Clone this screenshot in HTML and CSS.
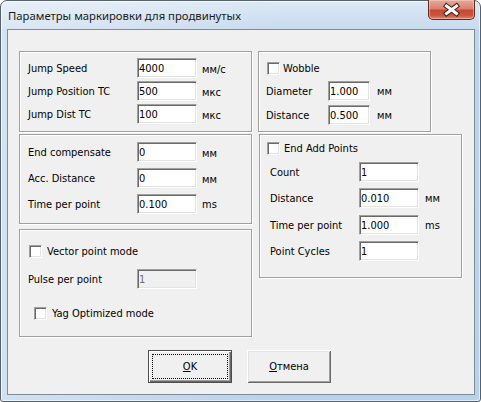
FILE: index.html
```html
<!DOCTYPE html>
<html>
<head>
<meta charset="utf-8">
<link rel="stylesheet" href="styles.css">
</head>
<body>
<div class="window">
  <div class="titlebar">
    <span class="title">Параметры маркировки для продвинутых</span>
    <div class="close">
      <svg width="47" height="19" viewBox="0 0 47 19">
        <path d="M18.5 6 L28.5 13.5 M28.5 6 L18.5 13.5" stroke="#4a1e18" stroke-width="5" stroke-linecap="square" fill="none"/>
        <path d="M18.5 6 L28.5 13.5 M28.5 6 L18.5 13.5" stroke="#ffffff" stroke-width="3" stroke-linecap="square" fill="none"/>
      </svg>
    </div>
  </div>
  <div class="client">
    <div class="columns">
      <div class="col-left">
        <div class="group g1">
          <div class="row"><span class="lbl w109">Jump Speed</span><input class="edit w60" type="text" value="4000"><span class="unit u2 gap5">мм/с</span></div>
          <div class="row r-g1"><span class="lbl w109">Jump Position TC</span><input class="edit w60" type="text" value="500"><span class="unit u2 gap5">мкс</span></div>
          <div class="row r-g1"><span class="lbl w109">Jump Dist TC</span><input class="edit w60" type="text" value="100"><span class="unit u2 gap5">мкс</span></div>
        </div>
        <div class="group g2">
          <div class="row"><span class="lbl w109">End compensate</span><input class="edit w60" type="text" value="0"><span class="unit u2 gap5">мм</span></div>
          <div class="row r-g2"><span class="lbl w109">Acc. Distance</span><input class="edit w60" type="text" value="0"><span class="unit u2 gap5">мм</span></div>
          <div class="row r-g2"><span class="lbl w109">Time per point</span><input class="edit w60" type="text" value="0.100"><span class="unit gap5">ms</span></div>
        </div>
        <div class="group g3">
          <div class="check c-vector"><span class="box"></span><span class="ctext">Vector point mode</span></div>
          <div class="row r-pulse"><span class="lbl w109">Pulse per point</span><input class="edit w60 disabled" type="text" value="1" disabled></div>
          <div class="check c-yag"><span class="box"></span><span class="ctext">Yag Optimized mode</span></div>
        </div>
      </div>
      <div class="col-right">
        <div class="group gw">
          <div class="check c-wobble"><span class="box"></span><span class="ctext">Wobble</span></div>
          <div class="row r-w1"><span class="lbl w62">Diameter</span><input class="edit w42" type="text" value="1.000"><span class="unit gap7">мм</span></div>
          <div class="row r-w2"><span class="lbl w62">Distance</span><input class="edit w42" type="text" value="0.500"><span class="unit gap7">мм</span></div>
        </div>
        <div class="group ge">
          <div class="check c-end"><span class="box"></span><span class="ctext">End Add Points</span></div>
          <div class="rows-e">
            <div class="row r-e1"><span class="lbl w89">Count</span><input class="edit w60" type="text" value="1"></div>
            <div class="row r-e"><span class="lbl w89">Distance</span><input class="edit w60" type="text" value="0.010"><span class="unit gap6">мм</span></div>
            <div class="row r-e r-e3"><span class="lbl w89">Time per point</span><input class="edit w60" type="text" value="1.000"><span class="unit gap6">ms</span></div>
            <div class="row r-e"><span class="lbl w89">Point Cycles</span><input class="edit w60" type="text" value="1"></div>
          </div>
        </div>
      </div>
    </div>
    <div class="buttons">
      <button class="btn default"><u>O</u>K</button>
      <button class="btn"><u>О</u>тмена</button>
    </div>
  </div>
</div>
</body>
</html>
```
FILE: styles.css
```css
html, body {
  margin: 0;
  padding: 0;
  background: #ffffff;
}
.window {
  box-sizing: border-box;
  width: 481px;
  height: 402px;
  border: 1px solid #56616e;
  border-radius: 7px 7px 3px 3px;
  padding: 0 5px 6px 6px;
  background:
    linear-gradient(to right, rgba(255,255,255,0.35), rgba(255,255,255,0) 60%),
    linear-gradient(to bottom, #dce8f5 0, #c8daee 28px, #bed5ed 29px, #b9d1ea 100%);
  box-shadow: inset 1px 1px 0 rgba(255,255,255,0.7), inset -1px -1px 0 rgba(255,255,255,0.6);
  display: flex;
  flex-direction: column;
  font-family: "DejaVu Sans Condensed", "DejaVu Sans", sans-serif;
  font-size: 11px;
  color: #000;
}
.titlebar {
  height: 28px;
  display: flex;
  align-items: flex-start;
}
.title {
  font-family: "Noto Sans", "DejaVu Sans", sans-serif;
  font-size: 11.3px;
  color: #1a1a1a;
  padding-left: 1px;
  padding-top: 7px;
  line-height: 16px;
}
.close {
  margin-left: auto;
  margin-top: -1px;
  width: 47px;
  height: 20px;
  box-sizing: border-box;
  border: 1px solid #5b2b25;
  border-top: none;
  border-radius: 0 0 5px 5px;
  background: linear-gradient(to bottom, #e7a99b 0, #d8826f 45%, #c64a33 55%, #c9553a 80%, #de8a6b 100%);
  box-shadow: inset 0 0 0 1px rgba(255,220,210,0.45);
  overflow: hidden;
}
.close svg {
  display: block;
  margin: 0 0 0 -1px;
}
.client {
  box-sizing: border-box;
  width: 468px;
  height: 366px;
  border: 1px solid #7d8b9b;
  background: #f0f0f0;
  display: flex;
  flex-direction: column;
}
.columns {
  display: flex;
  align-items: flex-start;
  padding: 21px 0 0 11px;
}
.col-left {
  display: flex;
  flex-direction: column;
  width: 233px;
  flex: none;
}
.col-right {
  display: flex;
  flex-direction: column;
  align-items: flex-start;
  margin-left: 6px;
}
.group {
  box-sizing: border-box;
  border: 1px solid #a0a0a0;
  box-shadow: inset 1px 1px 0 #ffffff, 1px 1px 0 #ffffff;
  display: flex;
  flex-direction: column;
  align-items: flex-start;
}
.g1 { height: 81px; padding: 6px 0 0 8px; }
.g2 { height: 90px; margin-top: 2px; padding: 7px 0 0 8px; }
.g3 { height: 108px; margin-top: 5px; padding: 15px 0 0 8px; }
.gw { width: 173px; height: 81px; padding: 10px 0 0 7px; }
.ge { width: 203px; height: 144px; margin-top: 2px; margin-left: 1px; padding: 7px 0 0 7px; }

.row {
  display: flex;
  align-items: flex-start;
  height: 20px;
}
.r-g1 { margin-top: 3px; }
.r-g2 { margin-top: 6px; }
.r-pulse { margin-top: 11px; }
.r-w1 { margin-top: 6px; }
.r-w2 { margin-top: 4px; }
.rows-e { margin-left: 3px; display: flex; flex-direction: column; }
.r-e1 { margin-top: 7px; }
.r-e { margin-top: 6px; }
.r-e3 { margin-top: 7px; }

.w109 { width: 109px; }
.w89 { width: 89px; }
.w62 { width: 62px; }
.w60 { width: 60px; }
.w42 { width: 42px; }
.gap5 { margin-left: 5px; }
.gap6 { margin-left: 6px; }
.gap7 { margin-left: 7px; }

.lbl, .unit {
  flex: none;
  line-height: 20px;
  padding-top: 1px;
  white-space: nowrap;
}
.unit.u2 { padding-top: 2px; }

.edit {
  flex: none;
  box-sizing: border-box;
  height: 20px;
  margin: 0;
  padding: 0 1px;
  border: 1px solid;
  border-color: #a0a0a0 #ffffff #ffffff #a0a0a0;
  box-shadow: inset 1px 1px 0 #696969, inset -1px -1px 0 #e3e3e3;
  background: #ffffff;
  font-family: inherit;
  font-size: 11px;
  line-height: 16px;
  color: #000;
  outline: none;
}
.edit.disabled {
  background: #f0f0f0;
  color: #6d6d6d;
}
.check {
  display: flex;
  align-items: flex-start;
  line-height: 13px;
}
.box {
  box-sizing: border-box;
  width: 13px;
  height: 13px;
  flex: none;
  border: 1px solid;
  border-color: #a0a0a0 #ffffff #ffffff #a0a0a0;
  box-shadow: inset 1px 1px 0 #696969, inset -1px -1px 0 #e3e3e3;
  background: #ffffff;
}
.ctext { margin-left: 4px; white-space: nowrap; }
.c-wobble { margin-left: 1px; }
.c-wobble .ctext { margin-left: 3px; }
.c-vector { margin-left: 1px; }
.c-vector .ctext { margin-left: 5px; }
.c-yag { margin-left: 6px; margin-top: 18px; }
.c-yag .ctext { margin-left: 5px; }

.buttons {
  display: flex;
  gap: 15px;
  margin-top: 13px;
  padding-left: 140px;
}
.btn {
  box-sizing: border-box;
  width: 84px;
  height: 33px;
  margin: 0;
  padding: 0;
  border: none;
  background: #f0f0f0;
  box-shadow: inset 1px 1px 0 #ffffff, inset -1px -1px 0 #696969, inset 2px 2px 0 #e3e3e3, inset -2px -2px 0 #a0a0a0;
  font-family: inherit;
  font-size: 11px;
  color: #000;
  line-height: 13px;
}
.btn.default {
  border: 1px solid #4d4d4d;
  box-shadow: inset 1px 1px 0 #ffffff, inset -1px -1px 0 #696969, inset -2px -2px 0 #a0a0a0;
  outline: 1px dotted #000;
  outline-offset: -5px;
}
```
